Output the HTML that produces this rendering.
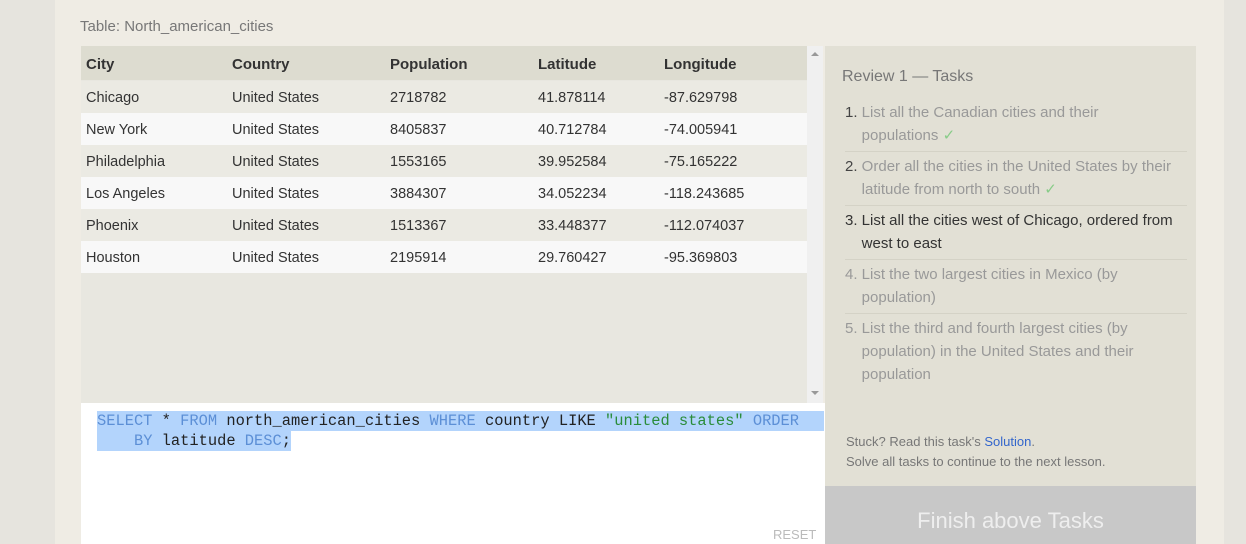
<!DOCTYPE html>
<html><head><style>
html,body{margin:0;width:1246px;height:544px;overflow:hidden}
body{background:#e6e4de;font-family:"Liberation Sans",sans-serif;position:relative}
.main{position:absolute;left:55px;top:0;width:1169px;height:544px;background:#efece4}
.t{position:absolute;font-size:15px;color:#333}
.lbl{left:80px;top:18px;color:#777;font-size:15px}
.tbl{position:absolute;left:81px;top:46px;width:726px;height:357px;background:#e8e7e0}
.row{position:absolute;left:0;width:726px;height:32px}
.row span{position:absolute;top:9px;font-size:14.5px;color:#333}
.hd{background:#dddcd0;height:34px;top:0}
.hd span{font-weight:bold;top:10px;font-size:15px}
.sb{position:absolute;left:807px;top:46px;width:16px;height:357px;background:#f0f0f0}
.ed{position:absolute;left:81px;top:403px;width:744px;height:141px;background:#fff}
.code{position:absolute;font-family:"Liberation Mono",monospace;font-size:15.4px;color:#222;background:#b3d4fc;height:20px;line-height:20px}
.kw{color:#5c8fd6}.st{color:#2a8c3a}
.rp{position:absolute;left:825px;top:46px;width:371px;height:440px;background:#e2e0d5}
.rp .it{position:absolute;left:20px;width:342px;font-size:15px;line-height:23px;color:#999;border-bottom:1px solid #d4d2c6}
.btn{position:absolute;left:825px;top:486px;width:371px;height:58px;background:#c8c8c8;color:#eee;font-size:22px;text-align:center;line-height:70px}
</style></head><body>
<div class="main"></div>
<div class="t lbl">Table: North_american_cities</div>
<div class="tbl">
<div class="row hd"><span style="left:5px">City</span><span style="left:151px">Country</span><span style="left:309px">Population</span><span style="left:457px">Latitude</span><span style="left:583px">Longitude</span></div>
<div class="row" style="top:35px;background:#ebeae3"><span style="left:5px">Chicago</span><span style="left:151px">United States</span><span style="left:309px">2718782</span><span style="left:457px">41.878114</span><span style="left:583px">-87.629798</span></div>
<div class="row" style="top:67px;background:#f8f8f8"><span style="left:5px">New York</span><span style="left:151px">United States</span><span style="left:309px">8405837</span><span style="left:457px">40.712784</span><span style="left:583px">-74.005941</span></div>
<div class="row" style="top:99px;background:#ebeae3"><span style="left:5px">Philadelphia</span><span style="left:151px">United States</span><span style="left:309px">1553165</span><span style="left:457px">39.952584</span><span style="left:583px">-75.165222</span></div>
<div class="row" style="top:131px;background:#f8f8f8"><span style="left:5px">Los Angeles</span><span style="left:151px">United States</span><span style="left:309px">3884307</span><span style="left:457px">34.052234</span><span style="left:583px">-118.243685</span></div>
<div class="row" style="top:163px;background:#ebeae3"><span style="left:5px">Phoenix</span><span style="left:151px">United States</span><span style="left:309px">1513367</span><span style="left:457px">33.448377</span><span style="left:583px">-112.074037</span></div>
<div class="row" style="top:195px;background:#f8f8f8"><span style="left:5px">Houston</span><span style="left:151px">United States</span><span style="left:309px">2195914</span><span style="left:457px">29.760427</span><span style="left:583px">-95.369803</span></div>
</div>
<div class="sb"><div style="position:absolute;left:4px;top:6px;border:4px solid transparent;border-bottom-color:#999;border-top:0"></div><div style="position:absolute;left:4px;bottom:8px;border:4px solid transparent;border-top-color:#999;border-bottom:0"></div></div>
<div class="ed">
<div class="code" style="left:16px;top:8px;width:727px"><span class="kw">SELECT</span> * <span class="kw">FROM</span> north_american_cities <span class="kw">WHERE</span> country LIKE <span class="st">"united states"</span> <span class="kw">ORDER</span></div>
<div class="code" style="left:16px;top:28px;width:194px">&nbsp;&nbsp;&nbsp;&nbsp;<span class="kw">BY</span> latitude <span class="kw">DESC</span>;</div>
<div style="position:absolute;left:692px;top:124px;font-size:13px;color:#bbb">RESET</div>
</div>
<div class="rp">
<div style="position:absolute;left:17px;top:22px;font-size:16px;color:#777">Review 1 — Tasks</div>
<div class="it" style="top:55px;height:50px"><span style="color:#444">1.</span> List all the Canadian cities and their<br>&nbsp;&nbsp;&nbsp;&nbsp;populations <span style="color:#8c8">✓</span></div>
<div class="it" style="top:109px;height:50px"><span style="color:#444">2.</span> Order all the cities in the United States by their<br>&nbsp;&nbsp;&nbsp;&nbsp;latitude from north to south <span style="color:#8c8">✓</span></div>
<div class="it" style="top:163px;height:50px;color:#333">3. List all the cities west of Chicago, ordered from<br>&nbsp;&nbsp;&nbsp;&nbsp;west to east</div>
<div class="it" style="top:217px;height:50px">4. List the two largest cities in Mexico (by<br>&nbsp;&nbsp;&nbsp;&nbsp;population)</div>
<div class="it" style="top:271px;height:70px;border:0">5. List the third and fourth largest cities (by<br>&nbsp;&nbsp;&nbsp;&nbsp;population) in the United States and their<br>&nbsp;&nbsp;&nbsp;&nbsp;population</div>
<div style="position:absolute;left:21px;top:386px;font-size:13px;color:#777;line-height:20px">Stuck? Read this task's <span style="color:#3366cc">Solution</span>.<br>Solve all tasks to continue to the next lesson.</div>
</div>
<div class="btn">Finish above Tasks</div>
</body></html>
